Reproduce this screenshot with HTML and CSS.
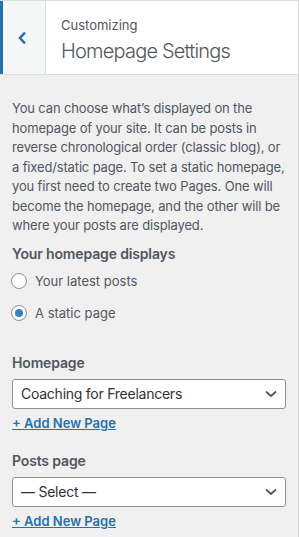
FILE: index.html
```html
<!DOCTYPE html>
<html lang="en">
<head>
<meta charset="utf-8">
<title>Homepage Settings</title>
<link rel="stylesheet" href="styles.css">
</head>
<body>
<div class="panel">
  <header class="head">
    <div class="back" aria-label="Back">
      <svg width="9" height="14" viewBox="0 0 9 14"><path d="M7 1.5 L2 7 L7 12.5" fill="none" stroke="#2271b1" stroke-width="2.5" stroke-linejoin="miter"/></svg>
    </div>
    <div class="titles">
      <div class="crumb">Customizing</div>
      <div class="title">Homepage Settings</div>
    </div>
  </header>
  <div class="body">
    <p class="desc">You can choose what’s displayed on the<br>homepage of your site. It can be posts in<br>reverse chronological order (classic blog), or<br>a fixed/static page. To set a static homepage,<br>you first need to create two Pages. One will<br>become the homepage, and the other will be<br>where your posts are displayed.</p>

    <div class="group">
      <div class="label">Your homepage displays</div>
      <div class="radio"><span class="dot"></span><span>Your latest posts</span></div>
      <div class="radio"><span class="dot on"></span><span>A static page</span></div>
    </div>

    <div class="field">
      <div class="label">Homepage</div>
      <div class="select"><span>Coaching for Freelancers</span>
        <svg width="12" height="8" viewBox="0 0 12 8"><path d="M1 1.5 L6 6 L11 1.5" fill="none" stroke="#50575e" stroke-width="1.7"/></svg>
      </div>
      <a class="add" href="#">+ Add New Page</a>
    </div>

    <div class="field">
      <div class="label">Posts page</div>
      <div class="select"><span>— Select —</span>
        <svg width="12" height="8" viewBox="0 0 12 8"><path d="M1 1.5 L6 6 L11 1.5" fill="none" stroke="#50575e" stroke-width="1.7"/></svg>
      </div>
      <a class="add" href="#">+ Add New Page</a>
    </div>
  </div>
</div>
</body>
</html>
```

FILE: styles.css
```css
html, body {
  margin: 0;
  padding: 0;
  background: #ffffff;
}
body {
  font-family: Inter, "Liberation Sans", sans-serif;
  color: #50575e;
  font-size: 13px;
}
.panel {
  width: 299px;
  height: 537px;
  background: #f0f0f1;
  border-right: 1px solid #dcdcde;
  border-top: 1px solid #dcdcde;
  box-sizing: border-box;
  overflow: hidden;
}
.head {
  display: flex;
  height: 73px;
  background: #fff;
  border-bottom: 1px solid #dcdcde;
}
.back {
  flex: none;
  width: 46px;
  border-left: 3px solid #2271b1;
  border-right: 1px solid #dcdcde;
  background: #f6f7f7;
  display: flex;
  align-items: center;
  justify-content: flex-start;
  padding-left: 15px;
  box-sizing: border-box;
}
.titles {
  padding: 14px 0 0 15px;
}
.crumb {
  font-size: 13px;
  line-height: 20px;
  color: #50575e;
}
.title {
  font-size: 20px;
  font-weight: 300;
  line-height: 28px;
  margin-top: 2px;
  letter-spacing: -0.8px;
  color: #50575e;
}
.body {
  padding: 24px 12px 0 12px;
}
.desc {
  margin: 0;
  line-height: 19.5px;
  font-size: 13px;
  letter-spacing: -0.15px;
  white-space: nowrap;
}
.group {
  margin-top: 8px;
}
.label {
  font-size: 14px;
  font-weight: 600;
  line-height: 20px;
  letter-spacing: -0.15px;
  color: #50575e;
}
.radio {
  display: flex;
  align-items: center;
  gap: 8px;
  font-size: 13px;
  line-height: 20px;
  margin-top: 7px;
  margin-left: -1px;
}
.radio + .radio {
  margin-top: 12px;
}
.dot {
  width: 16px;
  height: 16px;
  border: 1px solid #8c8f94;
  border-radius: 50%;
  background: #fff;
  box-sizing: border-box;
  display: flex;
  align-items: center;
  justify-content: center;
}
.dot.on::after {
  content: "";
  width: 8px;
  height: 8px;
  border-radius: 50%;
  background: #3582c4;
}
.field {
  margin-top: 30px;
}
.field + .field {
  margin-top: 18px;
}
.select {
  margin-top: 6px;
  height: 30px;
  box-sizing: border-box;
  border: 1px solid #8c8f94;
  border-radius: 3px;
  background: #fff;
  display: flex;
  align-items: center;
  justify-content: space-between;
  padding: 0 8px 0 8px;
  font-size: 14px;
  letter-spacing: -0.25px;
  color: #2c3338;
}
.add {
  display: inline-block;
  margin-top: 4px;
  font-size: 13px;
  font-weight: 600;
  line-height: 20px;
  color: #2271b1;
  text-decoration: underline;
}
```
